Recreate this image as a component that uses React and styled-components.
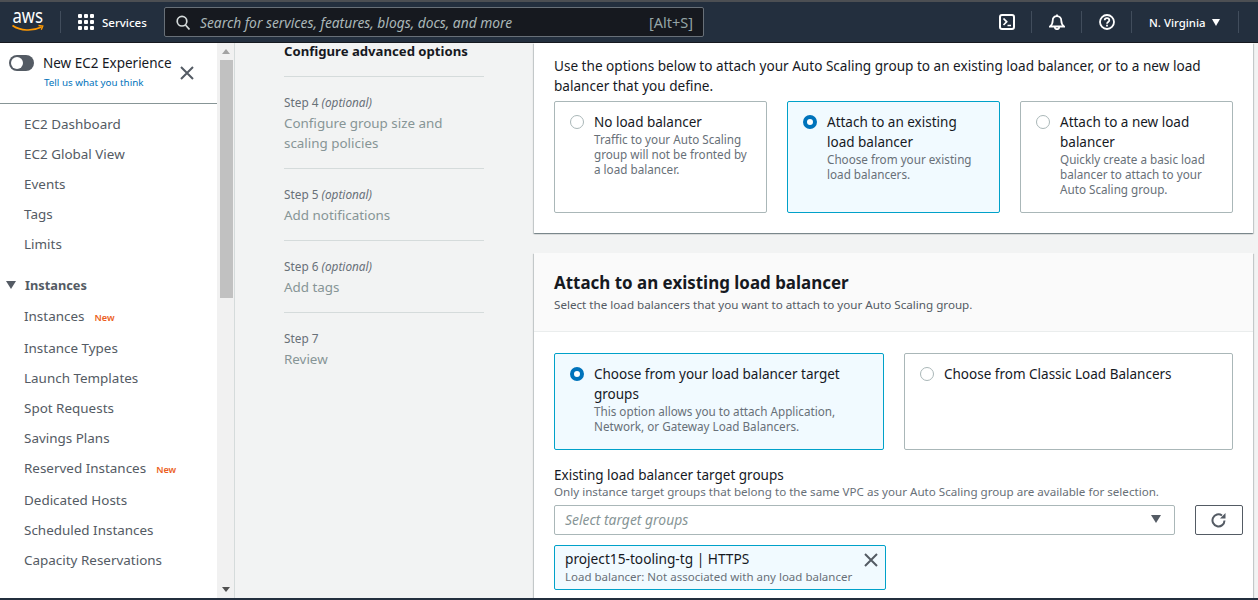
import React from 'react';
import styled, { createGlobalStyle } from 'styled-components';

const Global = createGlobalStyle`
  html, body { margin: 0; padding: 0; height: 100%; overflow: hidden; }
  * { box-sizing: border-box; }
  body { font-family: "Noto Sans", "Liberation Sans", sans-serif; font-size: 13.55px; color: #16191f; }
`;
const Page = styled.div`
  width: 1258px; height: 600px; display: flex; flex-direction: column; overflow: hidden; background: #f2f3f3;
  border-bottom: 2px solid #232f3e;
`;
const Header = styled.header`
  height: 43px; flex: none; background: #232f3e; border-top: 2px solid #4c4f53; border-bottom: 1px solid #16191f;
  display: flex; align-items: center; color: #fff; padding-left: 12px;
`;
const Logo = styled.div`width: 34px; height: 36px; flex: none; display: flex;`;
const Divider = styled.div`width: 1px; height: 22px; background: #414d5c; flex: none; margin: ${p => p.$m || '0'};`;
const Services = styled.div`display: flex; align-items: center; gap: 8px; font-size: 11.5px; font-weight: 500; margin-left: 17px; width: 69px; flex: none;`;
const GridIcon = styled.div`display: grid; grid-template-columns: repeat(3, 4px); gap: 2px;`;
const Dot = styled.i`width: 4px; height: 4px; background: #fff; border-radius: 1px; display: block;`;
const Search = styled.div`
  margin-left: 17px; width: 540px; height: 30px; flex: none; background: #16191f; border: 1px solid #687078; border-radius: 2px;
  display: flex; align-items: center; padding: 0 9px 0 11px; color: #95a5a6; font-size: 13.8px;
`;
const SearchText = styled.span`font-style: italic; flex: 1; margin-left: 10px; color: #aab7b8;`;
const Shortcut = styled.span`color: #95a5a6; font-size: 14.5px; margin-right: 1px;`;
const Spacer = styled.div`width: 278px; flex: none;`;
const HeaderIcon = styled.div`width: 49px; height: 22px; flex: none; display: flex; align-items: center; justify-content: center;`;
const Region = styled.div`font-size: 11.4px; font-weight: 500; display: flex; align-items: center; gap: 6px; width: 106px; padding-left: 17px; flex: none;`;
const Caret = styled.i`
  width: 0; height: 0; display: block; border-left: ${p => p.$s}px solid transparent; border-right: ${p => p.$s}px solid transparent;
  border-top: ${p => p.$s * 1.6}px solid ${p => p.$c || '#fff'};
`;
const Body = styled.div`flex: 1; display: flex; min-height: 0;`;
const Side = styled.aside`width: 235px; flex: none; display: flex; border-right: 1px solid #d5dbdb; overflow: hidden;`;
const Nav = styled.nav`width: 217px; flex: none; background: #fff; overflow: hidden;`;
const Toggle = styled.div`
  height: 61px; border-bottom: 1px solid #879596; display: flex; padding: 10px 0 0 9px;
`;
const Switch = styled.div`
  width: 25px; height: 16px; border-radius: 8px; background: #545b64; position: relative; flex: none; margin-top: 2px;
  &::after { content: ''; position: absolute; left: 2px; top: 2px; width: 12px; height: 12px; background: #fff; border-radius: 50%; }
`;
const ToggleText = styled.div`margin-left: 9px; width: 132px; flex: none;`;
const ToggleTitle = styled.div`font-size: 13.5px; line-height: 20px; white-space: nowrap; color: #16191f;`;
const ToggleLink = styled.div`font-size: 9.8px; line-height: 14px; margin-top: 3px; margin-left: 1px; color: #0073bb;`;
const CloseBox = styled.div`margin: 13px 0 0 5px;`;
const NavList = styled.div`padding-top: 5px;`;
const NavItem = styled.div`
  height: ${p => p.$h || 30}px; padding: 0 0 ${p => p.$h ? 2 : 0}px 24px; display: flex; align-items: center; color: #545b64; font-size: 13.45px; white-space: nowrap;
`;
const NavHead = styled.div`
  height: 30px; margin-top: 11px; margin-bottom: 1px; padding-left: 6px; display: flex; align-items: center; gap: 9px; color: #545b64; font-weight: 700; font-size: 12.8px;
`;
const NewTag = styled.span`color: #ec5f24; font-size: 9.2px; font-weight: 600; margin-left: 10px; margin-top: 2px;`;
const Scrollbar = styled.div`width: 18px; flex: none; background: #f1f1f1; display: flex; flex-direction: column; align-items: center; padding: 6px 0;`;
const ArrowUp = styled.i`width: 0; height: 0; border-left: 4px solid transparent; border-right: 4px solid transparent; border-bottom: 5px solid #a3a3a3; display: block;`;
const ArrowDown = styled.i`width: 0; height: 0; border-left: 4px solid transparent; border-right: 4px solid transparent; border-top: 5px solid #505050; display: block; margin-top: auto;`;
const Thumb = styled.div`width: 13px; height: 238px; background: #c1c1c1; margin-top: 6px;`;
const Main = styled.main`flex: 1; display: flex; padding-left: 49px; min-width: 0; overflow: hidden;`;
const Steps = styled.div`width: 200px; flex: none;`;
const StepCurrent = styled.div`font-weight: 700; font-size: 13.15px; line-height: 20px; padding: 0 0 15px; margin-top: -2px; border-bottom: 1px solid #d5dbdb;`;
const Step = styled.div`padding: 16px 0 15px; border-bottom: ${p => p.$last ? 'none' : '1px solid #d5dbdb'};`;
const StepNum = styled.div`font-size: 11.8px; line-height: 18px; color: #687078; em { font-style: italic; }`;
const StepName = styled.div`font-size: 13.4px; line-height: 20px; color: #879596; margin-top: 2px;`;
const Content = styled.div`margin-left: 50px; width: 719px; flex: none;`;
const Panel = styled.section`background: #fff; box-shadow: 0 1px 1px 0 rgba(0,28,36,.3), 1px 1px 1px 0 rgba(0,28,36,.15), -1px 1px 1px 0 rgba(0,28,36,.15);`;
const TopPanel = styled(Panel)`height: 190px; padding: 13px 20px 0;`;
const Intro = styled.p`margin: 0; font-size: 13.58px; line-height: 20px;`;
const CardRow = styled.div`display: flex; gap: ${p => p.$gap}px; margin-top: ${p => p.$mt}px;`;
const Card = styled.div`
  width: ${p => p.$w}px; height: ${p => p.$h}px; flex: none; display: flex; border-radius: 2px; padding: 10px 15px;
  border: 1px solid ${p => p.$on ? '#00a1c9' : '#aab7b8'}; background: ${p => p.$on ? '#f1faff' : '#fff'};
`;
const Radio = styled.div`
  width: 14px; height: 14px; border-radius: 50%; flex: none; margin-top: 3px; background: #fff;
  border: ${p => p.$on ? '4px solid #0073bb' : '1px solid #aab7b8'};
`;
const CardText = styled.div`margin-left: 10px; min-width: 0;`;
const CardTitle = styled.div`font-size: 13.5px; line-height: 20px; color: #16191f;`;
const CardDesc = styled.div`font-size: 11.7px; line-height: 15px; color: #687078;`;
const SecondPanel = styled(Panel)`margin-top: 20px; height: 400px;`;
const PanelHead = styled.div`height: 79px; background: #fafafa; border-bottom: 1px solid #eaeded; padding: 18px 20px 0;`;
const H2 = styled.h2`margin: 0; font-size: 16.95px; line-height: 24px; font-weight: 700; color: #16191f;`;
const Sub = styled.div`font-size: 11.65px; line-height: 16px; color: #545b64; margin-top: 2px;`;
const PanelBody = styled.div`padding: 21px 20px 0;`;
const FieldLabel = styled.div`margin-top: 15px; font-size: 13.5px; line-height: 20px; color: #16191f;`;
const FieldHint = styled.div`font-size: 11.62px; line-height: 15px; color: #687078; margin-top: -1px;`;
const SelectRow = styled.div`display: flex; align-items: center; margin-top: 6px;`;
const Select = styled.div`
  width: 621px; height: 30px; flex: none; border: 1px solid #aab7b8; border-radius: 2px; background: #fff; display: flex; align-items: center; justify-content: space-between;
  padding: 0 13px 2px 10px; font-size: 13.9px; font-style: italic; color: #879596;
`;
const Refresh = styled.div`
  width: 48px; height: 30px; margin-left: 20px; border: 1px solid #545b64; border-radius: 2px; display: flex; align-items: center; justify-content: center; background: #fff; flex: none;
`;
const Token = styled.div`
  position: relative; width: 332px; height: 45px; margin-top: 10px; border: 1px solid #00a1c9; border-radius: 2px; background: #f1faff; padding: 3px 10px 0;
`;
const TokenTitle = styled.div`font-size: 13.7px; line-height: 20px;`;
const TokenDesc = styled.div`font-size: 11.5px; line-height: 15px; color: #687078;`;
const TokenClose = styled.div`position: absolute; right: 7px; top: 7px; display: flex;`;

const X = ({ s = 14, c = '#545b64' }) => (
  <svg width={s} height={s} viewBox="0 0 14 14" fill="none" stroke={c} strokeWidth="2"><path d="M1 1l12 12M13 1L1 13" /></svg>
);

const navA = ['EC2 Dashboard', 'EC2 Global View', 'Events', 'Tags', 'Limits'];
const navB = [['Instances', true], ['Instance Types'], ['Launch Templates'], ['Spot Requests'], ['Savings Plans'], ['Reserved Instances', true], ['Dedicated Hosts'], ['Scheduled Instances'], ['Capacity Reservations']];

export default function App() {
  return (
    <Page>
      <Global />
      <Header>
        <Logo>
          <svg width="34" height="36" viewBox="0 0 34 36">
            <text x="0.500" y="19" fontFamily="Noto Sans, sans-serif" fontSize="19" textLength="30.500" lengthAdjust="spacingAndGlyphs" fill="#fff">aws</text>
            <path d="M0.500 21.500c8 5.500 20 6 29 1.500" fill="none" stroke="#f90" strokeWidth="1.600" />
            <path d="M26.500 21.500l4.300.5-1.500 3.800" fill="none" stroke="#f90" strokeWidth="1.300" />
          </svg>
        </Logo>
        <Divider $m="0 0 0 14px" />
        <Services>
          <GridIcon>{Array.from({ length: 9 }, (_, i) => <Dot key={i} />)}</GridIcon>
          <span>Services</span>
        </Services>
        <Search>
          <svg width="14" height="15" viewBox="0 0 14 15" fill="none" stroke="#d5dbdb" strokeWidth="1.700"><circle cx="6" cy="6.200" r="4.800" /><path d="M9.500 10l4 4.500" /></svg>
          <SearchText>Search for services, features, blogs, docs, and more</SearchText>
          <Shortcut>[Alt+S]</Shortcut>
        </Search>
        <Spacer />
        <HeaderIcon>
          <svg width="16" height="16" viewBox="0 0 16 16" fill="none" stroke="#fff" strokeWidth="2"><rect x="1" y="1" width="14" height="14" rx="2" /><path d="M4.500 4.500l3.200 3.300-3.200 3.200M8.500 11.500h3.500" strokeWidth="1.700" /></svg>
        </HeaderIcon>
        <Divider />
        <HeaderIcon>
          <svg width="16" height="16" viewBox="0 0 16 16" fill="none" stroke="#fff" strokeWidth="1.800"><path d="M1 12.500c2.200-1.800 2.700-3.200 2.700-5.700C3.700 4 5.500 2.200 8 2.200s4.300 1.800 4.300 4.600c0 2.500.5 3.900 2.700 5.700z" /><path d="M8 .5v1.700" /><path d="M5.800 13a2.200 2.200 0 0 0 4.400 0" /></svg>
        </HeaderIcon>
        <Divider />
        <HeaderIcon>
          <svg width="16" height="16" viewBox="0 0 16 16" fill="none" stroke="#fff" strokeWidth="1.800"><circle cx="8" cy="8" r="7" /><path d="M5.700 6.300C5.700 5 6.800 4.200 8 4.200s2.300.8 2.300 2c0 1.800-2.300 1.700-2.300 3.500" /><path d="M8 10.800v1.800" /></svg>
        </HeaderIcon>
        <Divider />
        <Region><span>N. Virginia</span><Caret $s={4.5} /></Region>
        <Divider />
      </Header>
      <Body>
        <Side>
          <Nav>
            <Toggle>
              <Switch />
              <ToggleText>
                <ToggleTitle>New EC2 Experience</ToggleTitle>
                <ToggleLink>Tell us what you think</ToggleLink>
              </ToggleText>
              <CloseBox><X /></CloseBox>
            </Toggle>
            <NavList>
              {navA.map(t => <NavItem key={t}>{t}</NavItem>)}
              <NavHead><Caret $s={5} $c="#545b64" />Instances</NavHead>
              {navB.map(([t, n]) => <NavItem key={t} $h={n ? 32 : undefined}>{t}{n && <NewTag>New</NewTag>}</NavItem>)}
            </NavList>
          </Nav>
          <Scrollbar><ArrowUp /><Thumb /><ArrowDown /></Scrollbar>
        </Side>
        <Main>
          <Steps>
            <StepCurrent>Configure advanced options</StepCurrent>
            <Step><StepNum>Step 4 <em>(optional)</em></StepNum><StepName>Configure group size and scaling policies</StepName></Step>
            <Step><StepNum>Step 5 <em>(optional)</em></StepNum><StepName>Add notifications</StepName></Step>
            <Step><StepNum>Step 6 <em>(optional)</em></StepNum><StepName>Add tags</StepName></Step>
            <Step $last><StepNum>Step 7</StepNum><StepName>Review</StepName></Step>
          </Steps>
          <Content>
            <TopPanel>
              <Intro>Use the options below to attach your Auto Scaling group to an existing load balancer, or to a new load balancer that you define.</Intro>
              <CardRow $gap={20} $mt={5}>
                <Card $w={213} $h={112}>
                  <Radio />
                  <CardText>
                    <CardTitle>No load balancer</CardTitle>
                    <CardDesc>Traffic to your Auto Scaling group will not be fronted by a load balancer.</CardDesc>
                  </CardText>
                </Card>
                <Card $w={213} $h={112} $on>
                  <Radio $on />
                  <CardText>
                    <CardTitle>Attach to an existing load balancer</CardTitle>
                    <CardDesc>Choose from your existing load balancers.</CardDesc>
                  </CardText>
                </Card>
                <Card $w={213} $h={112}>
                  <Radio />
                  <CardText>
                    <CardTitle>Attach to a new load balancer</CardTitle>
                    <CardDesc>Quickly create a basic load balancer to attach to your Auto Scaling group.</CardDesc>
                  </CardText>
                </Card>
              </CardRow>
            </TopPanel>
            <SecondPanel>
              <PanelHead>
                <H2>Attach to an existing load balancer</H2>
                <Sub>Select the load balancers that you want to attach to your Auto Scaling group.</Sub>
              </PanelHead>
              <PanelBody>
                <CardRow $gap={20} $mt={0}>
                  <Card $w={330} $h={97} $on>
                    <Radio $on />
                    <CardText>
                      <CardTitle>Choose from your load balancer target groups</CardTitle>
                      <CardDesc>This option allows you to attach Application, Network, or Gateway Load Balancers.</CardDesc>
                    </CardText>
                  </Card>
                  <Card $w={329} $h={97}>
                    <Radio />
                    <CardText><CardTitle>Choose from Classic Load Balancers</CardTitle></CardText>
                  </Card>
                </CardRow>
                <FieldLabel>Existing load balancer target groups</FieldLabel>
                <FieldHint>Only instance target groups that belong to the same VPC as your Auto Scaling group are available for selection.</FieldHint>
                <SelectRow>
                  <Select>Select target groups<Caret $s={5} $c="#545b64" /></Select>
                  <Refresh>
                    <svg width="16" height="16" viewBox="0 0 16 16" fill="none" stroke="#545b64" strokeWidth="2"><path d="M13.500 8.500a6 6 0 1 1-2.500-5" /><path d="M14.500 1v5.500H9z" fill="#545b64" stroke="none" /></svg>
                  </Refresh>
                </SelectRow>
                <Token>
                  <TokenTitle>project15-tooling-tg | HTTPS</TokenTitle>
                  <TokenDesc>Load balancer: Not associated with any load balancer</TokenDesc>
                  <TokenClose><X /></TokenClose>
                </Token>
              </PanelBody>
            </SecondPanel>
          </Content>
        </Main>
      </Body>
    </Page>
  );
}
